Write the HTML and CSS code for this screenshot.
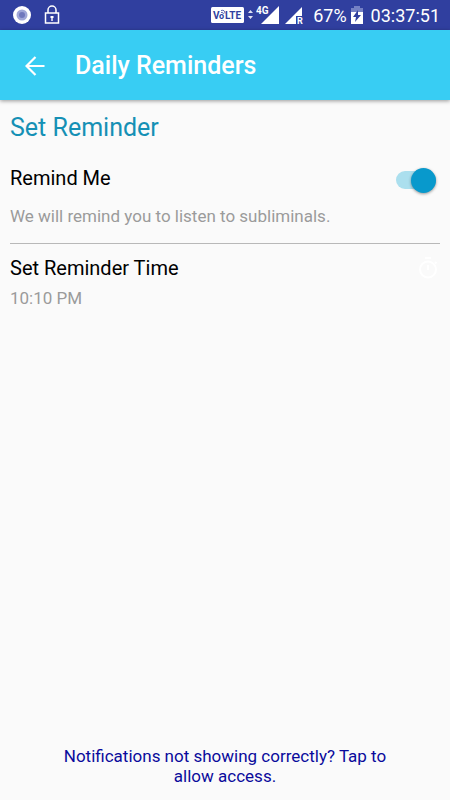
FILE: index.html
```html
<!DOCTYPE html>
<html lang="en">
<head>
<meta charset="utf-8">
<meta name="viewport" content="width=device-width, initial-scale=1">
<title>Daily Reminders</title>
<link rel="stylesheet" href="styles.css">
</head>
<body>
<div class="status">
  <div class="status-left">
    <svg width="20" height="20" viewBox="0 0 20 20" aria-hidden="true"><circle cx="10" cy="10" r="9" fill="#fff"/><circle cx="10" cy="10" r="5.500" fill="#a0a7d8"/><circle cx="10" cy="10" r="3" fill="#7078bd"/></svg>
    <svg width="16" height="20" viewBox="0 0 16 20" aria-hidden="true"><path d="M4 8V5a4 4 0 0 1 8 0v3" fill="none" stroke="#fff" stroke-width="1.5"/><rect x="1.5" y="8" width="13" height="10" fill="none" stroke="#fff" stroke-width="1.5"/><path d="M6.500 11h3v2H8.700v3H7.300v-3h-.8z" fill="#fff"/></svg>
  </div>
  <div class="status-right">
    <svg class="volte" width="33" height="18" viewBox="0 0 33 18" aria-label="VoLTE"><rect y="1" width="33" height="16" rx="1.500" fill="#fff"/><text x="2" y="13" font-size="10" font-weight="700" fill="#303f9f">V</text><text x="8" y="13" font-size="9" font-weight="700" fill="#303f9f">o</text><text x="14" y="13" font-size="10" font-weight="700" fill="#303f9f">LTE</text><path d="M10 6.500q2-1 2.500 1.500M10 4.500q4-1 4 3" fill="none" stroke="#303f9f" stroke-width=".8"/></svg>
    <svg class="arrows" width="5" height="18" viewBox="0 0 5 18" aria-hidden="true"><path d="M0 7l2.500-3L5 7zM0 10h5l-2.500 3z" fill="#dfe2f5"/></svg>
    <svg class="signal" width="24" height="20" viewBox="0 0 24 20" aria-label="4G signal"><path d="M23 1v18H5z" fill="#fff"/><text x="0" y="9" font-size="10" font-weight="700" fill="#fff" stroke="#303f9f" stroke-width="2" paint-order="stroke">4G</text></svg>
    <svg class="roaming" width="18" height="20" viewBox="0 0 18 20" aria-label="Roaming signal"><path d="M17 2v17H0z" fill="#fff"/><rect x="11" y="11" width="7" height="9" fill="#303f9f"/><text x="12" y="19" font-size="9" font-weight="700" fill="#fff">R</text></svg>
    <span class="percent">67%</span>
    <svg class="battery" width="12" height="18" viewBox="0 0 12 18" aria-hidden="true"><path d="M3 0h6v2h3v5H0V2h3z" fill="#7480c4"/><path d="M0 6h12v12H0z" fill="#fff"/><path d="M7 4L2 11h3l-1 5 6-7H7z" fill="#303f9f"/></svg>
    <time>03:37:51</time>
  </div>
</div>
<header class="appbar">
  <button class="back" type="button" aria-label="Back"><svg width="20" height="20" viewBox="0 0 20 20" aria-hidden="true"><path d="M19.500 10H1.500M10.500 1L1.500 10l9 9" fill="none" stroke="#fff" stroke-width="2.200"/></svg></button>
  <h1>Daily Reminders</h1>
</header>
<main>
  <h2>Set Reminder</h2>
  <section class="setting remind">
    <div class="row">
      <label class="name" for="remind">Remind Me</label>
      <input class="switch" id="remind" type="checkbox" role="switch" checked>
    </div>
    <p>We will remind you to listen to subliminals.</p>
  </section>
  <section class="setting">
    <div class="row">
      <h3 class="name">Set Reminder Time</h3>
      <button class="timer" type="button" aria-label="Choose time"><svg width="24" height="24" viewBox="0 0 24 24" aria-hidden="true"><path d="M9 2h6M12 9v5M19 6l1.500 1.500" fill="none" stroke="#fff" stroke-width="2"/><circle cx="12" cy="13.500" r="8" fill="none" stroke="#fff" stroke-width="2"/></svg></button>
    </div>
    <p class="value">10:10 PM</p>
  </section>
  <a class="access" href="#access">Notifications not showing correctly? Tap to allow access.</a>
</main>
</body>
</html>
```
FILE: styles.css
```css
* { box-sizing: border-box; }
body {
  margin: 0;
  min-height: 100vh;
  display: flex;
  flex-direction: column;
  background: #fafafa;
  color: #000;
  font-family: Roboto, sans-serif;
}
h1, h2, h3, p { margin: 0; font-weight: 400; }
button { padding: 0; border: 0; background: none; }
svg { display: block; flex: none; }
.status {
  height: 30px;
  padding: 0 10px 0 12px;
  display: flex;
  align-items: center;
  justify-content: space-between;
  background: #303f9f;
  color: #fff;
  font-size: 18px;
}
.status-left, .status-right { display: flex; align-items: center; }
.status-left { gap: 12px; }
.arrows { margin: 0 3px 0 4px; }
.roaming { margin: 0 10px 0 5px; }
.battery { margin: 0 8px 0 4px; }
.appbar {
  height: 70px;
  padding: 2px 25px 0;
  display: flex;
  align-items: center;
  gap: 30px;
  background: #38cdf3;
  color: #fff;
  box-shadow: 0 1px 4px rgba(0, 0, 0, .4);
}
h1 { font-size: 25px; font-weight: 500; line-height: 32px; }
main {
  flex: 1;
  padding: 12px 10px 14px;
  display: flex;
  flex-direction: column;
}
h2 { color: #1590b5; font-size: 25px; line-height: 32px; }
.setting { padding-top: 10px; }
.remind { padding: 20px 0 15px; border-bottom: 1px solid #b8b8b8; }
.row { display: flex; align-items: center; justify-content: space-between; }
.name { font-size: 20px; line-height: 28px; }
.setting p { color: #9b9b9b; font-size: 17px; line-height: 24px; }
.remind p { margin-top: 12px; }
.setting .value { margin-top: 4px; }
.switch {
  appearance: none;
  width: 40px;
  height: 18px;
  margin: 4px 4px 0 0;
  display: flex;
  align-items: center;
  justify-content: flex-end;
  border-radius: 9px;
  background: #abdfee;
}
.switch::before {
  content: "";
  width: 25px;
  height: 25px;
  flex: none;
  border-radius: 50%;
  background: #0899cc;
  box-shadow: 0 1px 3px rgba(0, 0, 0, .4);
}
.access {
  margin-top: auto;
  padding: 0 40px;
  color: #0a0a9c;
  font-size: 17px;
  line-height: 20px;
  text-align: center;
  text-decoration: none;
}
```
